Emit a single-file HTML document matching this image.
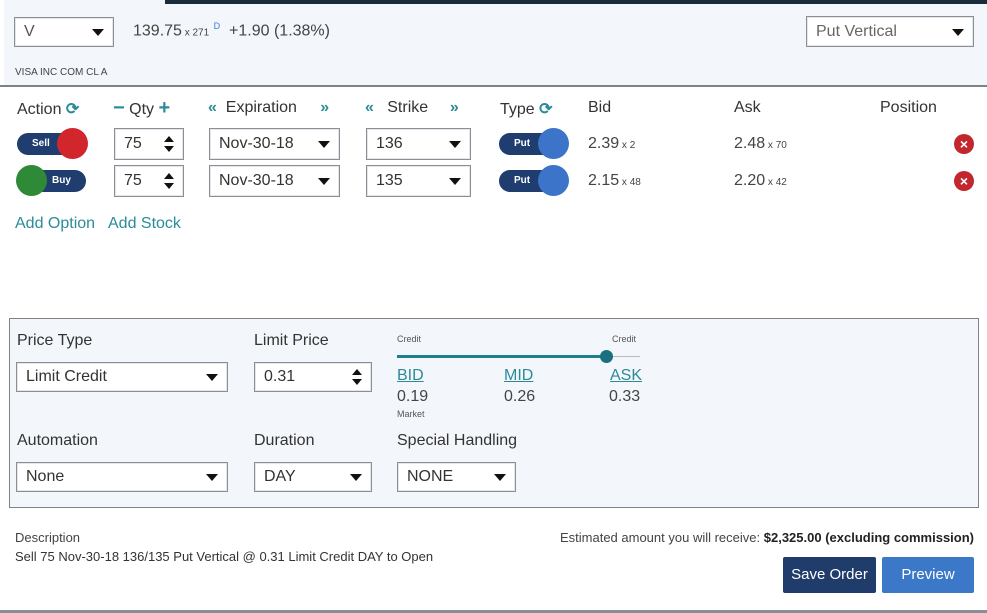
<!DOCTYPE html>
<html><head><meta charset="utf-8"><style>
*{box-sizing:border-box;margin:0;padding:0}
body{width:987px;height:613px;background:#fff;font-family:"Liberation Sans",sans-serif;color:#333;position:relative;overflow:hidden}
.a{position:absolute;white-space:nowrap}
.sel{position:absolute;background:#fff;border:1px solid #8a8f96;box-shadow:inset 0 0 0 1px #e4e6ea;font-size:16px;color:#333;padding-left:9px;display:flex;align-items:center}
.sel:after{content:"";position:absolute;right:9px;top:50%;margin-top:-3px;border-left:6px solid transparent;border-right:6px solid transparent;border-top:7px solid #111}
.spin:after{display:none}
.spin i{position:absolute;right:9px;top:50%;margin-top:-10px;width:10px;height:20px}
.spin i:before{content:"";position:absolute;left:0;top:2px;border-left:5px solid transparent;border-right:5px solid transparent;border-bottom:6px solid #111}
.spin i:after{content:"";position:absolute;left:0;bottom:2px;border-left:5px solid transparent;border-right:5px solid transparent;border-top:6px solid #111}
.h{font-size:16px;color:#333}
.tog{position:absolute;height:22px;border-radius:11px;background:#1f3e6f;color:#fff;font-size:10px;font-weight:bold}
.dot{position:absolute;width:31px;height:31px;border-radius:50%;top:-5px}
.x{position:absolute;width:20px;height:20px;border-radius:50%;background:#c1272d;color:#fff;font-size:14px;font-weight:bold;text-align:center;line-height:20px}
.teal{color:#2b8b99}
.sm{font-size:10px}
</style></head><body>
<div class="a" style="left:0;top:0;width:987px;height:86px;background:#f3f6fb"></div>
<div class="a" style="left:165px;top:0;width:822px;height:4px;background:#1a2b3a"></div>
<div class="a" style="left:0;top:0;width:4px;height:613px;background:#fff"></div>
<div class="a" style="left:0;top:85px;width:987px;height:2px;background:#7d8288"></div>

<div class="sel" style="left:14px;top:17px;width:100px;height:30px;color:#555">V</div>
<div class="a" style="left:133px;top:21px;font-size:16px;color:#444">139.75<span style="font-size:10px"> x 271</span> <sup style="font-size:9px;color:#3a7bd5">D</sup> &nbsp;+1.90 (1.38%)</div>
<div class="sel" style="left:806px;top:16px;width:168px;height:31px;color:#666">Put Vertical</div>
<div class="a" style="left:15px;top:67px;font-size:10px;color:#444">VISA INC COM CL A</div>

<!-- headers -->
<div class="a h" style="left:17px;top:99px">Action <span class="teal" style="font-weight:bold">⟳</span></div>
<div class="a h" style="left:113px;top:97px"><span class="teal" style="font-weight:bold;font-size:20px">−</span> Qty <span class="teal" style="font-weight:bold;font-size:20px">+</span></div>
<div class="a h" style="left:208px;top:99px"><span class="teal" style="font-weight:bold">«</span> &nbsp;Expiration &nbsp; <span class="teal" style="font-weight:bold;margin-left:10px">»</span></div>
<div class="a h" style="left:365px;top:99px"><span class="teal" style="font-weight:bold">«</span> &nbsp;&nbsp;Strike &nbsp;&nbsp;&nbsp;<span class="teal" style="font-weight:bold;margin-left:4px">»</span></div>
<div class="a h" style="left:500px;top:99px">Type <span class="teal" style="font-weight:bold">⟳</span></div>
<div class="a h" style="left:588px;top:99px">Bid</div>
<div class="a h" style="left:734px;top:99px">Ask</div>
<div class="a h" style="left:880px;top:99px">Position</div>

<!-- row1 -->
<div class="tog" style="left:17px;top:133px;width:66px"><span class="a" style="left:15px;top:5px">Sell</span><div class="dot" style="left:40px;background:#d0262c"></div></div>
<div class="sel spin" style="left:114px;top:128px;width:70px;height:32px">75<i></i></div>
<div class="sel" style="left:209px;top:128px;width:131px;height:32px">Nov-30-18</div>
<div class="sel" style="left:366px;top:128px;width:105px;height:32px">136</div>
<div class="tog" style="left:499px;top:133px;width:66px"><span class="a" style="left:15px;top:5px">Put</span><div class="dot" style="left:39px;background:#3b74c9"></div></div>
<div class="a" style="left:588px;top:135px;font-size:16px;color:#444">2.39<span class="sm"> x 2</span></div>
<div class="a" style="left:734px;top:135px;font-size:16px;color:#444">2.48<span class="sm"> x 70</span></div>
<div class="x" style="left:954px;top:134px">×</div>

<!-- row2 -->
<div class="tog" style="left:20px;top:170px;width:66px"><span class="a" style="left:32px;top:5px">Buy</span><div class="dot" style="left:-4px;background:#2e8a36"></div></div>
<div class="sel spin" style="left:114px;top:165px;width:70px;height:32px">75<i></i></div>
<div class="sel" style="left:209px;top:165px;width:131px;height:32px">Nov-30-18</div>
<div class="sel" style="left:366px;top:165px;width:105px;height:32px">135</div>
<div class="tog" style="left:499px;top:170px;width:66px"><span class="a" style="left:15px;top:5px">Put</span><div class="dot" style="left:39px;background:#3b74c9"></div></div>
<div class="a" style="left:588px;top:172px;font-size:16px;color:#444">2.15<span class="sm"> x 48</span></div>
<div class="a" style="left:734px;top:172px;font-size:16px;color:#444">2.20<span class="sm"> x 42</span></div>
<div class="x" style="left:954px;top:171px">×</div>

<div class="a teal" style="left:15px;top:215px;font-size:16px">Add Option</div>
<div class="a teal" style="left:108px;top:215px;font-size:16px">Add Stock</div>

<!-- order panel -->
<div class="a" style="left:9px;top:318px;width:970px;height:190px;background:#f3f6fb;border:1px solid #7d8288"></div>
<div class="a h" style="left:17px;top:332px">Price Type</div>
<div class="sel" style="left:16px;top:362px;width:212px;height:30px">Limit Credit</div>
<div class="a h" style="left:254px;top:332px">Limit Price</div>
<div class="sel spin" style="left:254px;top:362px;width:118px;height:30px">0.31<i></i></div>
<div class="a sm" style="left:397px;top:334px;font-size:9px;color:#555">Credit</div>
<div class="a sm" style="left:612px;top:334px;font-size:9px;color:#555">Credit</div>
<div class="a" style="left:397px;top:355px;width:210px;height:3px;background:#1f7d8c"></div>
<div class="a" style="left:607px;top:356px;width:33px;height:1px;background:#bbb"></div>
<div class="a" style="left:600px;top:350px;width:13px;height:13px;border-radius:50%;background:#1a6f80"></div>
<div class="a teal" style="left:397px;top:367px;font-size:16px;text-decoration:underline">BID</div>
<div class="a teal" style="left:504px;top:367px;font-size:16px;text-decoration:underline">MID</div>
<div class="a teal" style="left:610px;top:367px;font-size:16px;text-decoration:underline">ASK</div>
<div class="a" style="left:397px;top:388px;font-size:16px;color:#444">0.19</div>
<div class="a" style="left:504px;top:388px;font-size:16px;color:#444">0.26</div>
<div class="a" style="left:609px;top:388px;font-size:16px;color:#444">0.33</div>
<div class="a" style="left:397px;top:409px;font-size:9px;color:#555">Market</div>
<div class="a h" style="left:17px;top:432px">Automation</div>
<div class="sel" style="left:16px;top:462px;width:212px;height:30px">None</div>
<div class="a h" style="left:254px;top:432px">Duration</div>
<div class="sel" style="left:254px;top:462px;width:118px;height:30px">DAY</div>
<div class="a h" style="left:397px;top:432px">Special Handling</div>
<div class="sel" style="left:397px;top:462px;width:119px;height:30px">NONE</div>

<div class="a" style="left:15px;top:530px;font-size:13px;color:#444">Description</div>
<div class="a" style="left:15px;top:549px;font-size:13px;color:#333">Sell 75 Nov-30-18 136/135 Put Vertical @ 0.31 Limit Credit DAY to Open</div>
<div class="a" style="right:13px;top:530px;font-size:13px;color:#444">Estimated amount you will receive: <b style="color:#222">$2,325.00 (excluding commission)</b></div>
<div class="a" style="left:783px;top:557px;width:93px;height:36px;background:#1f3c6b;color:#fff;font-size:15px;text-align:center;line-height:36px;border-radius:2px">Save Order</div>
<div class="a" style="left:882px;top:557px;width:92px;height:36px;background:#3b78c8;color:#fff;font-size:15px;text-align:center;line-height:36px;border-radius:2px">Preview</div>
<div class="a" style="left:0;top:610px;width:987px;height:3px;background:#8a8f96"></div>
</body></html>
